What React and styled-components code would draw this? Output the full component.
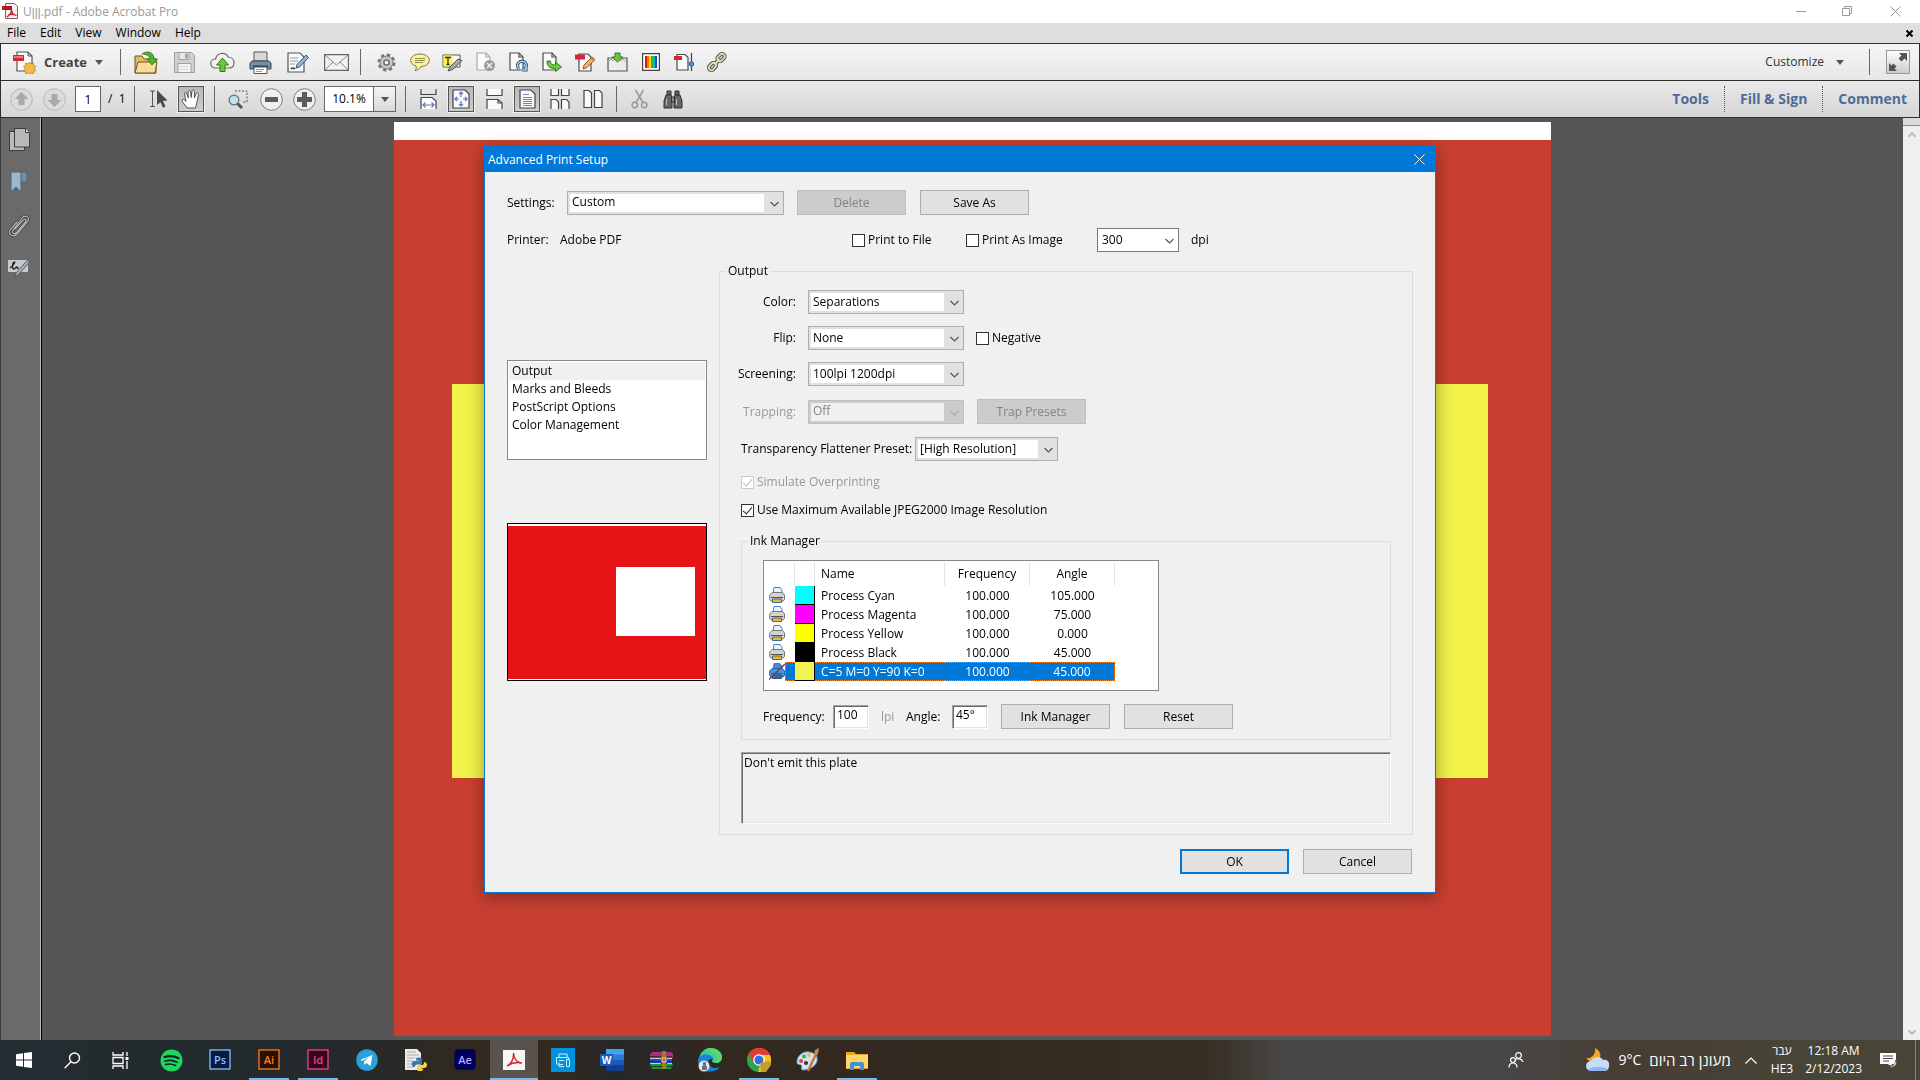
import styled, { createGlobalStyle, css } from 'styled-components'

const UI_FONT = '"Open Sans", "Noto Sans", "Liberation Sans", sans-serif'

export default function App() {
  return (
    <Window>
      <GlobalStyle />
      <TitleBar>
        <AcrobatIcon />
        <TitleText>Uןןן.pdf - Adobe Acrobat Pro</TitleText>
        <CaptionButton aria-label="Minimize">
          <svg width="11" height="11" viewBox="0 0 11 11" stroke="#999"><path d="M0 5.500h10" /></svg>
        </CaptionButton>
        <CaptionButton aria-label="Restore">
          <svg width="11" height="11" viewBox="0 0 11 11" fill="none" stroke="#999"><path d="M.5 2.500h7v7h-7zM2.500 2.500v-2h7v7h-2" /></svg>
        </CaptionButton>
        <CaptionButton aria-label="Close">
          <svg width="11" height="11" viewBox="0 0 11 11" stroke="#999"><path d="M.5.5l10 10M10.500.5l-10 10" /></svg>
        </CaptionButton>
      </TitleBar>

      <MenuBar>
        {['File', 'Edit', 'View', 'Window', 'Help'].map((name) => (
          <MenuButton key={name}>{name}</MenuButton>
        ))}
        <DocClose aria-label="Close document">
          <svg width="7" height="7" viewBox="0 0 7 7" stroke="#000" strokeWidth="2"><path d="M.5.5l6 6M6.500.5l-6 6" /></svg>
        </DocClose>
      </MenuBar>

      <MainToolbar>
        <CreateButton>
          <CreateIcon />
          Create
          <Caret />
        </CreateButton>
        <Separator />
        {fileTools.map(([name, Icon]) => (
          <ToolButton key={name} aria-label={name} $w={38}><Icon /></ToolButton>
        ))}
        <Separator $left={5} $right={9} />
        {quickTools.map(([name, Icon]) => (
          <ToolButton key={name} aria-label={name} $w={33}><Icon /></ToolButton>
        ))}
        <Spacer />
        <CustomizeButton>Customize <Caret /></CustomizeButton>
        <Separator $left={16} $right={16} />
        <ExpandButton aria-label="Read mode">
          <svg width="20" height="20" viewBox="0 0 20 20" fill="#555">
            <path d="M11 1h8v8l-2.500-2.500-3 3-3-3 3-3zM1 19v-8l2.500 2.500 2-2 3 3-2 2L9 19z" />
          </svg>
        </ExpandButton>
      </MainToolbar>

      <NavToolbar>
        <ToolButton $w={33} aria-label="Previous page"><RoundIcon dim d="M11.500 4l7 7h-4v6h-6v-6h-4z" /></ToolButton>
        <ToolButton $w={33} aria-label="Next page"><RoundIcon dim d="M11.500 19l7-7h-4v-6h-6v6h-4z" /></ToolButton>
        <PageInput aria-label="Page number" defaultValue="1" />
        <PageCount>/&nbsp;&nbsp;1</PageCount>
        <Separator />
        <ToolButton $w={34} aria-label="Select tool"><SelectIcon /></ToolButton>
        <PressedButton aria-label="Hand tool"><HandIcon /></PressedButton>
        <Separator />
        <ToolButton $w={34} aria-label="Marquee zoom"><MarqueeIcon /></ToolButton>
        <ToolButton $w={33} aria-label="Zoom out"><RoundIcon d="M5 9h13v5H5z" /></ToolButton>
        <ToolButton $w={33} aria-label="Zoom in"><RoundIcon d="M9 4h5v5h5v5h-5v5H9v-5H4V9h5z" /></ToolButton>
        <ZoomBox>
          <ZoomInput aria-label="Zoom" defaultValue="10.1%" />
          <ZoomDrop aria-label="Zoom levels"><Caret /></ZoomDrop>
        </ZoomBox>
        <Separator />
        <ToolButton $w={33} aria-label="Scrolling"><FitWidthIcon /></ToolButton>
        <PressedButton aria-label="Fit page"><FitPageIcon /></PressedButton>
        <ToolButton $w={34} aria-label="Continuous"><ContinuousIcon /></ToolButton>
        <PressedButton aria-label="Single page"><SinglePageIcon /></PressedButton>
        <ToolButton $w={33} aria-label="Two-up continuous"><TwoUpScrollIcon /></ToolButton>
        <ToolButton $w={33} aria-label="Two-up"><TwoUpIcon /></ToolButton>
        <Separator />
        <ToolButton $w={33} aria-label="Cut"><ScissorsIcon /></ToolButton>
        <ToolButton $w={33} aria-label="Find"><BinocularsIcon /></ToolButton>
        <Spacer />
        <PaneLinks>
          <PaneLink href="#tools">Tools</PaneLink>
          <PaneLink href="#sign">Fill &amp; Sign</PaneLink>
          <PaneLink href="#comment">Comment</PaneLink>
        </PaneLinks>
      </NavToolbar>

      <Workspace>
        <Rail>
          <RailButton aria-label="Page thumbnails"><PagesIcon /></RailButton>
          <RailButton aria-label="Bookmarks"><BookmarkIcon /></RailButton>
          <RailButton aria-label="Attachments"><ClipIcon /></RailButton>
          <RailButton aria-label="Signatures"><SignatureIcon /></RailButton>
        </Rail>
        <Canvas>
          <Sheet>
            <SheetInk><SheetBox /></SheetInk>
          </Sheet>
        </Canvas>
        <ScrollBar>
          <ScrollSplit />
          <Chevron w={8} color="#bbb" up />
          <Spacer />
          <Chevron w={8} color="#bbb" />
        </ScrollBar>
      </Workspace>

      <Taskbar />
      <DialogLayer>
        <PrintDialog />
      </DialogLayer>
    </Window>
  )
}

function PrintDialog() {
  return (
    <Dialog role="dialog" aria-label="Advanced Print Setup">
      <DialogTitle>
        Advanced Print Setup
        <DialogClose aria-label="Close">
          <svg width="11" height="11" viewBox="0 0 11 11" stroke="#fff"><path d="M.5.5l10 10M10.500.5l-10 10" /></svg>
        </DialogClose>
      </DialogTitle>
      <DialogBody>
        <Row>
          <Label htmlFor="settings" $w={60}>Settings:</Label>
          <Select id="settings" w={217} value="Custom" />
          <Button $left={13} disabled>Delete</Button>
          <Button $left={14}>Save As</Button>
        </Row>
        <PrinterRow>
          <Text $w={53}>Printer:</Text>
          <Text $w={292}>Adobe PDF</Text>
          <Check $w={114}><input type="checkbox" />Print to File</Check>
          <Check $w={131}><input type="checkbox" />Print As Image</Check>
          <Select id="dpi" w={82} value="300" open />
          <Label htmlFor="dpi" $left={12}>dpi</Label>
        </PrinterRow>

        <Columns>
          <SideColumn>
            <PanelList role="listbox" aria-label="Panels">
              {['Output', 'Marks and Bleeds', 'PostScript Options', 'Color Management'].map((name, i) => (
                <PanelItem key={name} role="option" aria-selected={i === 0} $on={i === 0}>{name}</PanelItem>
              ))}
            </PanelList>
            <Preview><PreviewInk><PreviewHole /></PreviewInk></Preview>
          </SideColumn>

          <Group>
            <legend>Output</legend>
            <GroupBody>
              <Row>
                <Label htmlFor="color" $w={55} $end>Color:</Label>
                <Select id="color" w={156} left={12} value="Separations" />
              </Row>
              <Row>
                <Label htmlFor="flip" $w={55} $end>Flip:</Label>
                <Select id="flip" w={156} left={12} value="None" />
                <Check $left={12}><input type="checkbox" />Negative</Check>
              </Row>
              <Row>
                <Label htmlFor="screening" $w={55} $end>Screening:</Label>
                <Select id="screening" w={156} left={12} value="100lpi 1200dpi" />
              </Row>
              <TrapRow>
                <Label htmlFor="trapping" $w={55} $end $dim>Trapping:</Label>
                <Select id="trapping" w={156} left={12} value="Off" disabled />
                <Button $left={13} disabled>Trap Presets</Button>
              </TrapRow>
              <Row>
                <Label htmlFor="flattener" $w={174}>Transparency Flattener Preset:</Label>
                <Select id="flattener" w={143} value="[High Resolution]" />
              </Row>
              <CheckStack>
                <Check $dim><input type="checkbox" defaultChecked disabled />Simulate Overprinting</Check>
                <Check><input type="checkbox" defaultChecked />Use Maximum Available JPEG2000 Image Resolution</Check>
              </CheckStack>
              <Group>
                <legend>Ink Manager</legend>
                <GroupBody>
                  <InkTable />
                  <InkControls>
                    <Label htmlFor="frequency" $w={70}>Frequency:</Label>
                    <SunkenInput id="frequency" defaultValue="100" />
                    <Text $left={12} $w={25} $dim>lpi</Text>
                    <Label htmlFor="angle" $w={46}>Angle:</Label>
                    <SunkenInput id="angle" defaultValue="45°" />
                    <Button $left={13}>Ink Manager</Button>
                    <Button $left={14}>Reset</Button>
                  </InkControls>
                </GroupBody>
              </Group>
              <Message>Don't emit this plate</Message>
            </GroupBody>
          </Group>
        </Columns>

        <DialogFooter>
          <Button $primary>OK</Button>
          <Button $left={14}>Cancel</Button>
        </DialogFooter>
      </DialogBody>
    </Dialog>
  )
}

const inks = [
  { name: 'Process Cyan', color: '#00ffff', freq: '100.000', angle: '105.000' },
  { name: 'Process Magenta', color: '#ff00ff', freq: '100.000', angle: '75.000' },
  { name: 'Process Yellow', color: '#ffff00', freq: '100.000', angle: '0.000' },
  { name: 'Process Black', color: '#000000', freq: '100.000', angle: '45.000' },
  { name: 'C=5 M=0 Y=90 K=0', color: '#f2f250', freq: '100.000', angle: '45.000', selected: true },
]

function InkTable() {
  return (
    <InkFrame>
      <Table>
        <colgroup>
          <col width="31" /><col width="20" /><col width="130" /><col width="85" /><col width="85" />
        </colgroup>
        <thead>
          <tr>
            <th aria-label="Emit" /><th aria-label="Swatch" /><th>Name</th><th>Frequency</th><th>Angle</th>
          </tr>
        </thead>
        <tbody>
          {inks.map((ink) => (
            <InkRow key={ink.name} $on={ink.selected}>
              <td><EmitCell $on={ink.selected}><InkPrinterIcon off={ink.selected} /></EmitCell></td>
              <Swatch $color={ink.color} />
              <td>{ink.name}</td>
              <td>{ink.freq}</td>
              <td>{ink.angle}</td>
            </InkRow>
          ))}
        </tbody>
      </Table>
    </InkFrame>
  )
}

function Select({ id, w, left, value, disabled, open }) {
  return (
    <SelectWrap $w={w} $left={left}>
      <SelectInput id={id} disabled={disabled} $open={open} defaultValue={value}>
        <option>{value}</option>
      </SelectInput>
      <SelectArrow><Chevron w={9} color={disabled ? '#aaa' : '#555'} thin /></SelectArrow>
    </SelectWrap>
  )
}

function Taskbar() {
  return (
    <TaskbarBase>
      <TaskButton aria-label="Start">
        <svg width="16" height="16" viewBox="0 0 16 16" fill="#fff"><path d="M0 2.200L7 1.200v6.300H0zM8 1l8-1v7.500H8zM0 8.500h7v6.300l-7-1zM8 8.500h8V16l-8-1.100z" /></svg>
      </TaskButton>
      <TaskButton aria-label="Search">
        <svg width="17" height="17" viewBox="0 0 17 17" fill="none" stroke="#fff" strokeWidth="1.400"><circle cx="10.500" cy="6" r="5" /><path d="M7 9.700L.6 16.200" /></svg>
      </TaskButton>
      <TaskButton aria-label="Task view">
        <svg width="17" height="17" viewBox="0 0 17 17" fill="none" stroke="#fff" strokeWidth="1.300"><path d="M1 0v3h10V0M1 5.500h10v6H1zM1 17v-3h10v3M15 0v4M15 9v8" /><path d="M13.500 5h3v3h-3z" fill="#fff" stroke="none" /></svg>
      </TaskButton>
      <AppRow>
        {taskApps.map(([name, Icon, state]) => (
          <TaskButton key={name} aria-label={name} $state={state}><Icon /></TaskButton>
        ))}
      </AppRow>
      <Spacer />
      <Tray>
        <TrayButton aria-label="People" $w={70}>
          <svg width="16" height="16" viewBox="0 0 16 16" fill="none" stroke="#fff" strokeWidth="1.200"><circle cx="10.500" cy="3.500" r="2.800" /><circle cx="5" cy="8" r="2.400" /><path d="M7 8.500c1.500-2.500 7-2.500 7.700 1.500M1 15.500c.3-6 7.700-6 8 0" /></svg>
        </TrayButton>
        <Weather>
          <svg width="25" height="24" viewBox="0 0 25 24">
            <path d="M10 0c6 3 7 9 3 12-4 3-9 2-12-2 6 1 10-4 9-10z" fill="#f5a524" />
            <path d="M6 23a5 5 0 010-10c1-4 9-6 12-1 4-1 7 2 6 6 0 3-2 5-5 5z" fill="#c8dcf8" />
            <path d="M3 22c5-5 15-3 20-1-1 1-2 2-4 2H6z" fill="#8db4ee" />
          </svg>
          <span>9°C</span>
          <span dir="rtl">מעונן רב היום</span>
        </Weather>
        <TrayButton aria-label="Hidden icons" $w={40}>
          <svg width="12" height="7" viewBox="0 0 12 7" fill="none" stroke="#fff" strokeWidth="1.200"><path d="M.5 6.500L6 1l5.500 5.500" /></svg>
        </TrayButton>
        <TrayText><span dir="rtl">עבר</span><span>HE3</span></TrayText>
        <TrayText $gap={12}><span>12:18 AM</span><span>2/12/2023</span></TrayText>
        <TrayButton aria-label="Notifications" $w={53}>
          <svg width="17" height="17" viewBox="0 0 17 17"><path d="M0 1h16v11h-4v4l-4-4H0z" fill="#fff" /><path d="M3 4h10M3 6.500h10M3 9h6" stroke="#444" /><path d="M15.500 8a4 4 0 11-6 5.500c4 1 6-2 6-5.500z" fill="#fff" stroke="#444" strokeWidth=".8" /></svg>
        </TrayButton>
      </Tray>
    </TaskbarBase>
  )
}

/* ---------- icons ---------- */

const Caret = () => (
  <svg width="8" height="5" viewBox="0 0 8 5" fill="#555"><path d="M0 0h8L4 5z" /></svg>
)

const Chevron = ({ w, color, up, thin }) => (
  <svg width={w} height="6" viewBox="0 0 9 6" fill="none" stroke={color} strokeWidth={thin ? 1.2 : 2.2}>
    <path d={up ? 'M.5 5L4.500 1l4 4' : 'M.5 1l4 4 4-4'} />
  </svg>
)

const RoundIcon = ({ d, dim }) => (
  <svg width="23" height="23" viewBox="0 0 23 23">
    <circle cx="11.500" cy="11.500" r="10.800" fill={dim ? '#dcdcdc' : '#f0f0f0'} stroke={dim ? '#b5b5b5' : '#7d7d7d'} />
    <path d={d} fill={dim ? '#aaa' : '#5c5c5c'} />
  </svg>
)

const Doc = ({ dim }) => (
  <g fill="#fbfbfb" stroke={dim ? '#aaa' : '#4a4a4a'} strokeWidth="1.200">
    <path d="M1 1h9l4 4v13H1z" /><path d="M10 1v4h4" fill="none" />
  </g>
)

const AcrobatIcon = () => (
  <svg width="17" height="17" viewBox="0 0 17 17">
    <path d="M3.500.5h9l3 3v12h-12z" fill="#f4f0f0" stroke="#8b5a5a" />
    <path d="M0 3h10v4H0z" fill="#b3151b" />
    <path d="M5 14c3-2 4.500-5 4.500-7.500M9.500 7c.5 3 2 5 5 5.500M6 12c3-1 5-1 8.500.5" fill="none" stroke="#b3151b" strokeWidth="1.200" />
  </svg>
)

const CreateIcon = () => (
  <svg width="23" height="23" viewBox="0 0 23 23">
    <path d="M4 1h11l4 4v15H4z" fill="#fafafa" stroke="#555" strokeWidth="1.200" />
    <path d="M15 1v4h4" fill="none" stroke="#555" />
    <path d="M0 4h11v6H0z" fill="#d6282e" /><path d="M1 5h9v2H1z" fill="#f0767a" />
    <path d="M16.500 11l1.500 2 2.500-1v2.500l2.500 1-1.500 2 1.500 2-2.500 1V23l-2.500-1-1.500 1-1.500-1-2.500 1v-2.500l-2-1 1.500-2-1.500-2 2-1V12l2.500 1z" fill="#f3bb45" stroke="#b97d15" strokeWidth=".7" />
  </svg>
)

const OpenIcon = () => (
  <svg width="24" height="23" viewBox="0 0 24 23">
    <path d="M1 22V5h7l2 3h12v14z" fill="#e3bd63" stroke="#6d572a" />
    <path d="M1 22l3-11h19l-2 11z" fill="#f6dc97" stroke="#6d572a" />
    <path d="M8 3c5-4 12-2 12 5h3.500L18 14l-5-6h3c0-3-4-5-8-5z" fill="#53b12e" stroke="#2d7512" strokeWidth=".8" />
  </svg>
)

const SaveIcon = () => (
  <svg width="21" height="21" viewBox="0 0 21 21" stroke="#a0a0a0" fill="#d0d0d0">
    <path d="M.5.500h17l3 3v17H.5z" /><path d="M5 .5h10v7H5z" fill="#e8e8e8" /><path d="M11.500 2h2v4h-2z" fill="#aaa" />
    <path d="M4 11.500h13v9H4z" fill="#f4f4f4" /><path d="M6 14.500h9M6 17.500h9" stroke="#ccc" strokeDasharray="2 1" />
  </svg>
)

const CloudIcon = () => (
  <svg width="25" height="20" viewBox="0 0 25 20">
    <path d="M5 16a4.500 4.500 0 01.5-9C7 0 16 0 18 5c4 0 6 3 6 6s-2 5-5 5z" fill="#f2f2f2" stroke="#6a6a6a" strokeWidth="1.200" />
    <path d="M12.500 6l6 7h-3.500v6.500h-5V13H6.500z" fill="#6cc93c" stroke="#2f7d14" />
  </svg>
)

const PrinterIcon = () => (
  <svg width="23" height="23" viewBox="0 0 23 23">
    <path d="M5 1h13v9H5z" fill="#d9d9d9" stroke="#555" />
    <path d="M1 12l2-2h17l2 2v6H1z" fill="#7390a8" stroke="#33475a" /><path d="M4 14.500h15v2H4z" fill="#2a3947" />
    <path d="M5 16h13v6.500H5z" fill="#fff" stroke="#555" /><path d="M7 18.500h8M7 20.500h6" stroke="#999" />
  </svg>
)

const EditDocIcon = () => (
  <svg width="22" height="21" viewBox="0 0 22 21">
    <path d="M1 1h12l4 4v15H1z" fill="#fbfbfb" stroke="#555" strokeWidth="1.200" />
    <path d="M3 6h8M3 9h8M3 12h5" stroke="#999" /><path d="M4 17c2-3 2 1 4-1" stroke="#222" fill="none" strokeWidth="1.400" />
    <path d="M9 16l1-3.500L19 3l2.500 2.500-9 9.500z" fill="#8fb2d6" stroke="#33475a" strokeWidth=".9" />
  </svg>
)

const MailIcon = () => (
  <svg width="25" height="17" viewBox="0 0 25 17" stroke="#666" fill="none">
    <path d="M.6.600h23.800v15.800H.6z" fill="#f1f1f1" strokeWidth="1.200" />
    <path d="M1 1l11.500 10L24 1M1 16l8-8M24 16l-8-8" stroke="#888" />
  </svg>
)

const GearIcon = () => (
  <svg width="19" height="19" viewBox="0 0 19 19">
    <circle cx="9.500" cy="9.500" r="7.800" fill="none" stroke="#777" strokeWidth="2.400" strokeDasharray="3.500 2.630" />
    <circle cx="9.500" cy="9.500" r="6.500" fill="#c8c8c8" stroke="#777" />
    <circle cx="9.500" cy="9.500" r="2.600" fill="#f1f1f1" stroke="#666" strokeWidth="1.400" />
  </svg>
)

const CommentIcon = () => (
  <svg width="20" height="19" viewBox="0 0 20 19">
    <path d="M10 1c5 0 9.300 2.500 9.300 6.300S15 13.500 11 13.500c-1.500 2.500-4 4-6 4 1.500-1.500 1.500-3 1-4.500C2.500 12 .7 10 .7 7.300.7 3.500 5 1 10 1z" fill="#fbf59a" stroke="#77754b" />
    <path d="M5 5.500h10M5 7.500h10M5 9.500h8" stroke="#8e8b4a" />
  </svg>
)

const HighlightIcon = () => (
  <svg width="21" height="19" viewBox="0 0 21 19">
    <path d="M1 2h17v12H1z" fill="#f8f8f8" stroke="#555" /><path d="M1.500 2.500h9v11h-9z" fill="#fdf04b" />
    <path d="M3 4.500h6M6 4.500v7M4.500 11.500h3" stroke="#333" strokeWidth="1.300" />
    <path d="M6 18l2-4 8-8 4 1.500-8 8-3 1.500z" fill="#a8a8a8" stroke="#444" strokeWidth=".9" />
  </svg>
)

const DocDeleteIcon = () => (
  <svg width="20" height="20" viewBox="0 0 20 20">
    <Doc dim /><circle cx="13.500" cy="13.500" r="5.500" fill="#9c9c9c" /><path d="M11 11l5 5M16 11l-5 5" stroke="#eee" strokeWidth="1.500" />
  </svg>
)

const DocRotateIcon = () => (
  <svg width="20" height="20" viewBox="0 0 20 20">
    <Doc /><path d="M10 17a4.500 4.500 0 116 0M13 18h4v-4" fill="none" stroke="#33567b" strokeWidth="3.200" />
    <path d="M10 17a4.500 4.500 0 116 0M13 18h4v-4" fill="none" stroke="#a9caea" strokeWidth="1.500" />
  </svg>
)

const DocExportIcon = () => (
  <svg width="20" height="20" viewBox="0 0 20 20">
    <Doc /><path d="M5 9h3.500c0 3 1 4 5 4v-3l6 5-6 4.500v-3C7 16.500 5 14 5 9z" fill="#6cc93c" stroke="#2f7d14" />
  </svg>
)

const PdfEditIcon = () => (
  <svg width="20" height="20" viewBox="0 0 20 20">
    <path d="M4 2h9l3 3v14H4z" fill="#fbfbfb" stroke="#4a4a4a" strokeWidth="1.200" />
    <path d="M0 2.500h10v5H0z" fill="#cf2630" />
    <path d="M8 17l1-4 8-8 3 2.500-8 8z" fill="#f6b267" stroke="#7a4a1a" strokeWidth=".9" /><path d="M17 5l3 2.500-1.500 1.500-3-2.500z" fill="#e96d5d" />
  </svg>
)

const InboxIcon = () => (
  <svg width="21" height="20" viewBox="0 0 21 20">
    <path d="M1 6h19v13H1z" fill="#ececec" stroke="#555" strokeWidth="1.200" />
    <path d="M2 9l2-2 2 2 2-2 2 2 2-2 2 2 2-2 3 3" stroke="#aaa" fill="none" />
    <path d="M8 1h5v4h3l-5.500 5L5 5h3z" fill="#6cc93c" stroke="#2f7d14" />
  </svg>
)

const SpectrumIcon = () => (
  <svg width="18" height="18" viewBox="0 0 18 18">
    <path d="M.6.600h16.800v16.800H.6z" fill="#fff" stroke="#444" strokeWidth="1.200" />
    {['#d11', '#f70', '#fd0', '#2b3', '#0bc', '#24c'].map((c, i) => (
      <path key={c} d={`M${3 + i * 2} 3h2v12h-2z`} fill={c} />
    ))}
  </svg>
)

const PdfSliderIcon = () => (
  <svg width="20" height="18" viewBox="0 0 20 18">
    <path d="M3 1.500h8l3 3V17H3z" fill="#fbfbfb" stroke="#4a4a4a" strokeWidth="1.200" />
    <path d="M0 3h8v4H0z" fill="#cf2630" /><path d="M17.500 0v18" stroke="#444" strokeWidth="1.200" />
    <circle cx="17.500" cy="11" r="2.200" fill="#4f93dd" stroke="#265a94" />
  </svg>
)

const ChainIcon = () => (
  <svg width="20" height="20" viewBox="0 0 20 20" fill="none">
    {[['#555', 4], ['#e5dcb8', 1.8]].map(([c, w]) => (
      <g key={c} stroke={c} strokeWidth={w}>
        <rect x="-4" y="-2.500" width="8" height="5" rx="2.500" transform="translate(5.500 14.500) rotate(-45)" />
        <rect x="-4" y="-2.500" width="8" height="5" rx="2.500" transform="translate(14 5.500) rotate(-45)" />
        <path d="M7.500 12.500l5-5" />
      </g>
    ))}
  </svg>
)

const SelectIcon = () => (
  <svg width="19" height="18" viewBox="0 0 19 18">
    <path d="M1 1h5M1 16.500h5M3.500 1v15.500" stroke="#555" fill="none" />
    <path d="M8 0l10.500 10.500-4.500.5 2.500 5.500-2.500 1.200-2.500-5.500L8 15z" fill="#4c4c4c" />
  </svg>
)

const HandIcon = () => (
  <svg width="20" height="20" viewBox="0 0 20 20">
    <path d="M6 19c-1-3-5-5-5-8 1-1.500 3 0 4 1.500L3.500 5c0-1.800 2-1.800 2.500 0l1.300 4L7 3c0-2 2.300-2 2.500 0l.7 5.500.8-6.500c.3-1.500 2.500-1.200 2.500.5L13.300 9l2-4.500c.7-1.300 2.500-.6 2.200 1L16 13l-1.500 6z" fill="#fff" stroke="#555" />
  </svg>
)

const MarqueeIcon = () => (
  <svg width="20" height="19" viewBox="0 0 20 19">
    <path d="M7 1h12v11h-5" fill="none" stroke="#555" strokeDasharray="2 1.500" />
    <circle cx="6" cy="10" r="4.800" fill="#bfe4f5" stroke="#777" strokeWidth="1.400" /><path d="M9.500 13.500l4.500 4.500" stroke="#555" strokeWidth="3" />
  </svg>
)

const FitWidthIcon = () => (
  <svg width="17" height="20" viewBox="0 0 17 20" fill="none" stroke="#444" strokeWidth="1.200">
    <path d="M1 0v5.500h15V0" /><path d="M1 20V8.500h11l4 3.500v8" fill="#fff" /><path d="M3 16h11M5.500 13.500L3 16l2.500 2.500M11.500 13.500L14 16l-2.500 2.500" stroke="#5a76b8" />
  </svg>
)

const FitPageIcon = () => (
  <svg width="18" height="20" viewBox="0 0 18 20" fill="none" stroke="#444" strokeWidth="1.200">
    <path d="M1 1h12l4 4v14H1z" fill="#fafafa" />
    <path d="M9 3v5M9 12v5M3 10h4M11 10h4M7 5l2-2 2 2M7 15l2 2 2-2M5 8l-2 2 2 2M13 8l2 2-2 2" stroke="#5a76b8" />
  </svg>
)

const ContinuousIcon = () => (
  <svg width="17" height="20" viewBox="0 0 17 20" fill="#fafafa" stroke="#444" strokeWidth="1.200">
    <path d="M1 0v6.500h15V0M1 20v-9.500h11l4 3.500v6" /><path d="M12 10.500V14h4" fill="none" />
  </svg>
)

const SinglePageIcon = () => (
  <svg width="17" height="20" viewBox="0 0 17 20" fill="none" stroke="#444" strokeWidth="1.200">
    <path d="M1 1h11l4 4v14H1z" fill="#fafafa" /><path d="M4 5.500h6M4 8.500h9M4 10.500h9M4 12.500h9M4 14.500h9M4 16.500h9" stroke="#6d86bf" />
  </svg>
)

const TwoUpScrollIcon = () => (
  <svg width="20" height="20" viewBox="0 0 20 20" fill="#fafafa" stroke="#444" strokeWidth="1.200">
    <path d="M1 0v6.500h7.500V0M11.500 0v6.500H19V0M1 20v-9.500h5l2.500 2.500v7M11.500 20v-9.500h5L19 13v7" />
  </svg>
)

const TwoUpIcon = () => (
  <svg width="20" height="20" viewBox="0 0 20 20" fill="#fafafa" stroke="#444" strokeWidth="1.200">
    <path d="M1 1.500h5l2.500 2.500v14.500H1zM11.500 1.500h5L19 4v14.500h-7.500z" />
  </svg>
)

const ScissorsIcon = () => (
  <svg width="17" height="20" viewBox="0 0 17 20" fill="none" stroke="#999" strokeWidth="1.500">
    <circle cx="3.800" cy="16" r="2.700" /><circle cx="13.200" cy="16" r="2.700" /><path d="M5 13.500L12.500 1M12 13.500L4.500 1" />
  </svg>
)

const BinocularsIcon = () => (
  <svg width="20" height="19" viewBox="0 0 20 19" fill="#666" stroke="#2f2f2f">
    <path d="M4 1h4v4H4zM12 1h4v4h-4z" /><path d="M3 5h5l1 3v10H1v-7zM12 5h5l2 6v7h-8V8z" /><path d="M8.500 7h3v5h-3z" fill="#888" />
    <path d="M3.500 9v6M13.500 9v6" stroke="#bbb" />
  </svg>
)

const PagesIcon = () => (
  <svg width="21" height="23" viewBox="0 0 21 23" fill="#b9b9b9" stroke="#3c3c3c">
    <path d="M.5 3.500h15v19H.5z" /><path d="M5.500.500h11l4 4v14.500h-15z" /><path d="M16.500.500v4h4" fill="#ddd" />
  </svg>
)

const BookmarkIcon = () => (
  <svg width="18" height="23" viewBox="0 0 18 23">
    <path d="M8 1h9v10H8z" fill="#6f8fa6" stroke="#4a6377" /><path d="M1 1h10v20l-5-5-5 5z" fill="#9db6c8" stroke="#4a6377" />
  </svg>
)

const ClipIcon = () => (
  <svg width="22" height="23" viewBox="0 0 22 23" fill="none" strokeLinecap="round">
    <path d="M7 15L15 6c2-2 4 0 2.500 2L9 18c-3 3-6 1-4-2L14 4c3-4 8-1 6 3L10 19c-4 5-11 2-8-3l7-8" stroke="#3c3c3c" strokeWidth="2.600" />
    <path d="M7 15L15 6c2-2 4 0 2.500 2L9 18c-3 3-6 1-4-2L14 4c3-4 8-1 6 3L10 19c-4 5-11 2-8-3l7-8" stroke="#b5b5b5" strokeWidth="1.200" />
  </svg>
)

const SignatureIcon = () => (
  <svg width="23" height="19" viewBox="0 0 23 19">
    <path d="M0 1h20v12H0z" fill="#c9c9c9" /><path d="M2 9c4-3 6-7 4-6s-2 7 0 7 2-3 3-2-1 2 2 1" fill="none" stroke="#222" strokeWidth="1.300" />
    <path d="M7 18l1-4L19 1.500l3 1L11 15z" fill="#9db0c0" stroke="#4a5866" strokeWidth=".9" />
  </svg>
)

const InkPrinterIcon = ({ off }) => (
  <svg width="16" height="17" viewBox="0 0 16 17">
    <path d="M5 .5h6l2 3V7H4z" fill={off ? '#3a8fe0' : '#eaf3fc'} stroke="#4c7fb8" />
    <path d="M.7 8L3 5.500h10.500L15.500 8v4.500L14 14H2L.7 12.500z" fill={off ? '#4c95d4' : '#d2d2d2'} stroke={off ? '#2a66a5' : '#777'} />
    <path d="M2 10.500h12" stroke={off ? '#2a66a5' : '#555'} />
    <path d="M3.500 12h9v3.500h-9z" fill={off ? '#2e6fa5' : '#efb91f'} stroke={off ? '#29557c' : '#46689a'} />
    {off && <path d="M0 16.500L16 1" stroke="#8a3468" strokeWidth="1.500" />}
  </svg>
)

const fileTools = [
  ['Open', OpenIcon], ['Save', SaveIcon], ['Share', CloudIcon],
  ['Print', PrinterIcon], ['Edit text', EditDocIcon], ['Email', MailIcon],
]

const quickTools = [
  ['Preferences', GearIcon], ['Add note', CommentIcon], ['Highlight text', HighlightIcon],
  ['Delete pages', DocDeleteIcon], ['Rotate pages', DocRotateIcon], ['Export pages', DocExportIcon],
  ['Edit object', PdfEditIcon], ['Insert pages', InboxIcon], ['Output preview', SpectrumIcon],
  ['Preflight', PdfSliderIcon], ['Add link', ChainIcon],
]

const AdobeTile = ({ text, bg, fg, round }) => (
  <svg width="22" height="22" viewBox="0 0 22 22">
    <rect x="1" y="1" width="20" height="19" rx={round ? 3 : 0} fill={bg} stroke={round ? bg : fg} strokeWidth="1.300" />
    <text x="11" y="15" fill={fg} fontSize="11" fontWeight="600" textAnchor="middle">{text}</text>
  </svg>
)

const Spotify = () => (
  <svg width="23" height="23" viewBox="0 0 23 23" fill="none" stroke="#16231b" strokeLinecap="round">
    <circle cx="11.500" cy="11.500" r="11" fill="#1ed760" stroke="none" />
    <path d="M4.500 8c5-1.500 10-1 14 1.200" strokeWidth="2.200" /><path d="M5 12c4.500-1.300 8.500-.8 12 1.200" strokeWidth="1.800" /><path d="M5.500 15.500c4-1 7-.6 10 1" strokeWidth="1.500" />
  </svg>
)
const Telegram = () => (
  <svg width="22" height="22" viewBox="0 0 22 22"><circle cx="11" cy="11" r="10.800" fill="#2a9fd8" /><path d="M4 11l12.500-5-2 11-4-3-2 2-.5-3.500 5.500-5-7 4.300z" fill="#fff" /></svg>
)
const PythonFile = () => (
  <svg width="24" height="24" viewBox="0 0 24 24">
    <path d="M1 1h12l4 4v17H1z" fill="#ececec" /><path d="M3 4h9M3 7h12M3 10h8M3 13h6M3 16h6M3 19h6" stroke="#aaa" />
    <path d="M12 14v-3c0-2 6-2 6 0v4c0 1-1 1.500-2 1.500h-3c-1.500 0-2 1-2 2.500h-1c-3 0-3-6 0-6h5v-.5h-3z" fill="#3b77a8" />
    <path d="M20 14c4 0 4 6 0 6h-4v.5h3v1c0 2-6 2-6 0v-3c0-1 1-1.500 2-1.500h3c1.500 0 2-1 2-3z" fill="#ffd43b" />
  </svg>
)
const AcrobatApp = () => (
  <svg width="22" height="20" viewBox="0 0 22 20"><path d="M0 0h22v20H0z" fill="#f6f6f6" /><path d="M4 16c4-2 7-7 6.500-12.500.5 5 3.500 9 8 9.500-5-1-10 0-14.500 3" fill="none" stroke="#d5202a" strokeWidth="1.500" strokeLinejoin="round" /></svg>
)
const PrintApp = () => (
  <svg width="24" height="24" viewBox="0 0 24 24" fill="none" stroke="#cdeeff"><path d="M0 0h24v24H0z" fill="#0092da" stroke="none" /><path d="M8 9V6h8v3M7 16H5.500V9.500h12V11M8 12.500h5M8 14.500v4h5M8 16.500h4M15.500 11.500h3v7h-3z" /></svg>
)
const WordApp = () => (
  <svg width="24" height="22" viewBox="0 0 24 22">
    <path d="M6 0h18v6H6z" fill="#41a5ee" /><path d="M6 5.500h18V11H6z" fill="#2b7cd3" /><path d="M6 11h18v5.500H6z" fill="#185abd" /><path d="M6 16.500h18V22H6z" fill="#103f91" />
    <rect y="5" width="13" height="12" rx="1" fill="#185abd" /><text x="6.500" y="14.500" fill="#fff" fontSize="10" fontWeight="700" textAnchor="middle">W</text>
  </svg>
)
const WinRar = () => (
  <svg width="24" height="19" viewBox="0 0 24 19">
    <path d="M1 3l3-2h18l2 2v4H1z" fill="#a9327f" /><path d="M1 8h22v4H1z" fill="#2c49c8" /><path d="M1 13h23l-2 5H3z" fill="#1e9a32" />
    <path d="M1 5.500h11M1 10.500h11M2 15.500h11M18 5.500h5M18 10.500h5M18 15.500h5" stroke="#222" strokeWidth=".8" /><path d="M1 7.500h11M1 12.500h11M18 7.500h5M18 12.500h5" stroke="#eee" strokeWidth=".8" />
    <path d="M13 0h4v18h-4z" fill="#a9752c" /><path d="M13 7h4v4h-4z" fill="none" stroke="#e6d08a" />
  </svg>
)
const Edge = () => (
  <svg width="24" height="24" viewBox="0 0 24 24">
    <path d="M1 11C2 4 7 0 13 0c6 0 11 4 11 9 0 4-3 6-6 6-4 0-5-2-3-4-1-4-9-5-14 0z" fill="#3ccf9a" />
    <path d="M12 0c6 0 12 4 12 9 0 4-3 6-6 6 3-6-2-12-12-13 2-1 4-2 6-2z" fill="#57d86c" />
    <path d="M0 12c1-6 12-8 15-1-4-1-6 3-4 6s6 4 11 2c-5 7-22 7-22-7z" fill="#1583d8" />
    <circle cx="6" cy="18" r="5.500" fill="#dfe6ee" /><path d="M5 14h3v4H5zM4 18h5v4H4z" fill="#6b737c" />
  </svg>
)
const Chrome = () => (
  <svg width="24" height="24" viewBox="0 0 24 24">
    <circle cx="12" cy="12" r="12" fill="#2ea44f" /><path d="M1.600 6A12 12 0 0122.400 6L12 12z" fill="#e33b2e" /><path d="M22.400 6H12l2 8-3 10A12 12 0 0022.400 6z" fill="#fbc21a" />
    <path d="M1.600 6l5 9L12 7h11l-.6-1A12 12 0 001.600 6z" fill="#e33b2e" /><circle cx="12" cy="12" r="5.800" fill="#fff" /><circle cx="12" cy="12" r="4.500" fill="#2a72e5" />
    <path d="M13 15l9-2 2 4-5 7h-5z" fill="#c79b32" />
  </svg>
)
const Paint = () => (
  <svg width="24" height="24" viewBox="0 0 24 24">
    <path d="M1 14C1 8 7 3 13 4s9 4 8 9-8 9-14 9c-3 0 0-4-2-5s-4 0-4-3z" fill="#cfe3f3" stroke="#6f9dc3" />
    <circle cx="5" cy="13" r="2" fill="#d9443f" /><circle cx="8" cy="8.500" r="2" fill="#4aa83c" /><circle cx="13" cy="7" r="2" fill="#efc02f" /><circle cx="10" cy="15" r="2" fill="#2b3540" />
    <path d="M12 23L20 6" stroke="#c4742a" strokeWidth="2.200" /><path d="M18 6l1-4 4-2-1 6-2 2z" fill="#b58a60" />
  </svg>
)
const Explorer = () => (
  <svg width="22" height="19" viewBox="0 0 22 19">
    <path d="M0 1h8l2 2h12v15H0z" fill="#e9a820" /><path d="M0 4h22v13H0z" fill="#ffd667" /><path d="M4 19v-6c0-1 1-2 2-2h10c1 0 2 1 2 2v6h-4v-4H8v4z" fill="#3e94d6" />
  </svg>
)

const taskApps = [
  ['Spotify', Spotify],
  ['Photoshop', () => <AdobeTile text="Ps" bg="#0b1a45" fg="#86bdf5" />],
  ['Illustrator', () => <AdobeTile text="Ai" bg="#2b0f05" fg="#ff7c1f" />, 'running'],
  ['InDesign', () => <AdobeTile text="Id" bg="#31081c" fg="#f43f8e" />, 'running'],
  ['Telegram', Telegram],
  ['Python', PythonFile],
  ['After Effects', () => <AdobeTile text="Ae" bg="#00005b" fg="#b9a6ff" round />],
  ['Acrobat', AcrobatApp, 'active'],
  ['Printers', PrintApp],
  ['Word', WordApp],
  ['WinRAR', WinRar],
  ['Edge', Edge],
  ['Chrome', Chrome, 'running'],
  ['Paint', Paint],
  ['File Explorer', Explorer, 'running'],
]

/* ---------- styles ---------- */

const GlobalStyle = createGlobalStyle`
  *, *::before, *::after {
    box-sizing: border-box;
  }
  body {
    margin: 0;
    font: 12px/18px ${UI_FONT};
    color: #000;
  }
  button, input, select {
    font: inherit;
    color: inherit;
    margin: 0;
  }
  button {
    padding: 0;
    border: 0;
    background: none;
  }
  svg {
    display: block;
    flex: none;
  }
`

const Window = styled.div`
  display: flex;
  flex-direction: column;
  height: 100vh;
  overflow: hidden;
`

const TitleBar = styled.header`
  display: flex;
  align-items: center;
  height: 23px;
  padding-left: 2px;
  background: #fff;
`

const TitleText = styled.span`
  flex: 1;
  margin-left: 4px;
  color: #999;
`

const CaptionButton = styled.button`
  display: flex;
  align-items: center;
  justify-content: center;
  width: 46px;
  height: 20px;
  &:last-child {
    width: 50px;
  }
`

const MenuBar = styled.nav`
  display: flex;
  align-items: center;
  height: 20px;
  padding-right: 7px;
  background: #dedede;
`

const MenuButton = styled.button`
  padding: 0 7px;
`

const DocClose = styled.button`
  margin-left: auto;
`

const toolbar = css`
  display: flex;
  align-items: center;
  border: 1px solid #2e2e2e;
  border-bottom: 0;
`

const MainToolbar = styled.div`
  ${toolbar}
  height: 37px;
  padding: 0 9px 0 12px;
  background: linear-gradient(#f5f5f5, #e7e7e7);
`

const NavToolbar = styled.div`
  ${toolbar}
  height: 38px;
  padding: 0 12px 0 4px;
  background: linear-gradient(#e8e8e8, #d6d6d6);
  border-bottom: 1px solid #2e2e2e;
`

const Separator = styled.span`
  width: 1px;
  height: 26px;
  margin: 0 ${({ $right = 6 }) => $right}px 0 ${({ $left = 7 }) => $left}px;
  background: #666;
`

const Spacer = styled.span`
  flex: 1;
`

const ToolButton = styled.button`
  display: flex;
  align-items: center;
  justify-content: center;
  width: ${({ $w }) => $w}px;
  height: 32px;
`

const PressedButton = styled(ToolButton)`
  width: 26px;
  height: 26px;
  margin: 0 3px;
  border: 1px solid #555;
  background: linear-gradient(#b9b9b9, #cdcdcd);
  outline: 1px solid #f2f2f2;
`

const CreateButton = styled.button`
  display: flex;
  align-items: center;
  gap: 8px;
  margin-right: 10px;
  font-size: 13px;
  font-weight: 700;
  color: #444;
`

const CustomizeButton = styled.button`
  display: flex;
  align-items: center;
  gap: 12px;
  margin-right: 9px;
  color: #333;
`

const ExpandButton = styled.button`
  display: flex;
  align-items: center;
  justify-content: center;
  width: 24px;
  height: 24px;
  border: 1px solid #999;
  background: linear-gradient(#fff, #ccc);
`

const PageInput = styled.input`
  width: 26px;
  height: 26px;
  margin-left: 4px;
  border: 1px solid #666;
  background: #fff;
  text-align: center;
`

const PageCount = styled.span`
  width: 19px;
  margin-left: 7px;
`

const ZoomBox = styled.div`
  display: flex;
  width: 72px;
  height: 26px;
  margin: 0 2px 0 3px;
  border: 1px solid #666;
`

const ZoomInput = styled.input`
  width: 48px;
  border: 0;
  padding: 0;
  text-align: center;
`

const ZoomDrop = styled.button`
  flex: 1;
  display: flex;
  align-items: center;
  justify-content: center;
  border-left: 1px solid #666;
  background: linear-gradient(#f4f4f4, #d9d9d9);
`

const PaneLinks = styled.nav`
  display: flex;
`

const PaneLink = styled.a`
  padding: 4px 15px;
  font-size: 14px;
  font-weight: 700;
  color: #4c6c99;
  text-decoration: none;
  & + & {
    border-left: 1px dotted #555;
  }
  &:last-child {
    padding-right: 0;
  }
`

const Workspace = styled.main`
  flex: 1;
  min-height: 0;
  display: flex;
  border-left: 1px solid #3a3a3a;
  background: #565656;
`

const Rail = styled.aside`
  display: flex;
  flex-direction: column;
  width: 41px;
  border-right: 1px solid #000;
  background: #6a6a6a;
  box-shadow: inset -1px 0 #bbb;
`

const RailButton = styled.button`
  display: flex;
  align-items: center;
  justify-content: center;
  width: 36px;
  height: 43px;
`

const Canvas = styled.div`
  flex: 1;
  display: flex;
  justify-content: center;
  padding: 4px 0;
`

const Sheet = styled.div`
  display: flex;
  height: 100%;
  aspect-ratio: 1157 / 914;
  padding-top: 18px;
  background: #fff;
`

const SheetInk = styled.div`
  flex: 1;
  display: flex;
  padding: 244px 63px 258px 58px;
  background: #c83f31;
`

const SheetBox = styled.div`
  flex: 1;
  background: #f2f24b;
`

const ScrollBar = styled.div`
  display: flex;
  flex-direction: column;
  align-items: center;
  width: 17px;
  padding-bottom: 5px;
  background: #f0f0f0;
`

const ScrollSplit = styled.span`
  width: 17px;
  height: 8px;
  margin-bottom: 6px;
  border-bottom: 1px solid #888;
  background: #dcdcdc;
`

const DialogLayer = styled.div`
  position: fixed;
  inset: 0 0 41px;
  display: flex;
  align-items: center;
  justify-content: center;
`

const Dialog = styled.section`
  width: 952px;
  border: 1px solid #0078d7;
  background: #f0f0f0;
  box-shadow: 0 4px 16px rgba(0, 0, 0, 0.35);
`

const DialogTitle = styled.h1`
  display: flex;
  align-items: center;
  justify-content: space-between;
  height: 25px;
  margin: 0;
  padding: 0 10px 0 3px;
  background: #0078d7;
  color: #fff;
  font-size: 12px;
  font-weight: 400;
`

const DialogClose = styled.button`
  color: #fff;
`

const DialogBody = styled.form`
  padding: 18px 22px;
`

const Row = styled.div`
  display: flex;
  align-items: center;
  min-height: 24px;
`

const PrinterRow = styled(Row)`
  margin-top: 13px;
`

const TrapRow = styled(Row)`
  min-height: 27px;
`

const InkControls = styled(Row)`
  margin-top: 1px;
`

const text = css`
  flex: none;
  width: ${({ $w }) => ($w ? `${$w}px` : 'auto')};
  margin-left: ${({ $left = 0 }) => $left}px;
  color: ${({ $dim }) => ($dim ? '#999' : '#000')};
  white-space: nowrap;
`

const Text = styled.span`
  ${text}
`

/* right-aligned labels may grow past their column on the left */
const Label = styled.label`
  ${text}
  ${({ $end }) => $end && 'display: flex; justify-content: flex-end;'}
`

const Check = styled.label`
  ${text}
  display: flex;
  align-items: center;
  gap: 3px;
  input {
    appearance: none;
    display: flex;
    justify-content: center;
    width: 13px;
    height: 13px;
    border: 1px solid ${({ $dim }) => ($dim ? '#ccc' : '#333')};
    background: #fff;
  }
  input:checked::before {
    content: '';
    width: 5px;
    height: 9px;
    border: solid ${({ $dim }) => ($dim ? '#bbb' : '#222')};
    border-width: 0 1px 1px 0;
    transform: rotate(40deg);
  }
`

const Button = styled.button.attrs({ type: 'button' })`
  flex: none;
  width: 109px;
  height: 25px;
  margin-left: ${({ $left = 0 }) => $left}px;
  border: ${({ $primary }) => ($primary ? '2px solid #0078d7' : '1px solid #adadad')};
  background: #e1e1e1;
  &:disabled {
    border-color: #bfbfbf;
    background: #ccc;
    color: #838383;
  }
`

const SelectWrap = styled.span`
  position: relative;
  flex: none;
  width: ${({ $w }) => $w}px;
  margin-left: ${({ $left = 0 }) => $left}px;
`

const SelectInput = styled.select`
  appearance: none;
  display: block;
  width: 100%;
  height: 24px;
  padding: 0 20px 1px 4px;
  border: 1px solid ${({ $open }) => ($open ? '#7a7a7a' : '#adadad')};
  border-radius: 0;
  background: ${({ $open }) =>
    $open ? '#fff' : 'linear-gradient(#fff, #fff) 2px 2px / calc(100% - 21px) 18px no-repeat #e1e1e1'};
  &:disabled {
    border-color: #bfbfbf;
    background-color: #ccc;
    background-image: linear-gradient(#f0f0f0, #f0f0f0);
    color: #838383;
    opacity: 1;
  }
`

const SelectArrow = styled.span`
  position: absolute;
  top: 10px;
  right: 5px;
  pointer-events: none;
`

const Columns = styled.div`
  display: grid;
  grid-template-columns: 200px 1fr;
  gap: 12px;
  margin-top: 10px;
`

const SideColumn = styled.div`
  display: flex;
  flex-direction: column;
  gap: 63px;
  padding-top: 98px;
`

const PanelList = styled.ul`
  height: 100px;
  margin: 0;
  padding: 1px;
  border: 1px solid #828790;
  background: #fff;
  list-style: none;
`

const PanelItem = styled.li`
  padding-left: 3px;
  background: ${({ $on }) => ($on ? '#f0f0f0' : '#fff')};
`

const Preview = styled.div`
  display: flex;
  height: 158px;
  padding: 2px 0 1px;
  border: 1px solid #000;
  background: #fff;
`

const PreviewInk = styled.div`
  flex: 1;
  display: flex;
  padding: 41px 11px 43px 108px;
  background: #e61417;
`

const PreviewHole = styled.div`
  flex: 1;
  background: #fff;
`

const Group = styled.fieldset`
  min-width: 0;
  margin: 0;
  padding: 0;
  border: 1px solid #dcdcdc;
  legend {
    margin-left: 6px;
    padding: 0 2px;
  }
`

const GroupBody = styled.div`
  display: flex;
  flex-direction: column;
  gap: 12px;
  padding: 10px 21px;
`

const CheckStack = styled.div`
  display: flex;
  flex-direction: column;
  gap: 10px;
  padding-bottom: 1px;
`

const InkFrame = styled.div`
  width: 396px;
  height: 131px;
  padding-top: 1px;
  border: 1px solid #828790;
  background: #fff;
`

const Table = styled.table`
  width: 351px;
  table-layout: fixed;
  border-spacing: 0;
  th, td {
    padding: 0;
    font-weight: 400;
    text-align: center;
    white-space: nowrap;
  }
  th {
    height: 24px;
    border-right: 1px solid #e5e5e5;
  }
  th:nth-child(3), td:nth-child(3) {
    padding-left: 6px;
    text-align: left;
  }
`

const InkRow = styled.tr`
  td {
    height: 19px;
    line-height: 17px;
  }
  ${({ $on }) => $on && css`
    color: #fff;
    td:nth-child(n + 3) {
      background: #0078d7;
      border-top: 1px dotted #ff8728;
      border-bottom: 1px dotted #ff8728;
    }
    td:last-child {
      border-right: 1px dotted #ff8728;
    }
  `}
`

const EmitCell = styled.div`
  display: flex;
  align-items: center;
  height: 19px;
  padding-left: 5px;
  &::after {
    content: '';
    flex: 1;
    align-self: stretch;
    ${({ $on }) => $on && css`
      background: #0078d7;
      border: 1px dotted #ff8728;
      border-right: 0;
    `}
  }
`

const Swatch = styled.td`
  border: solid #000;
  border-width: 0 1px 1px 0;
  background: ${({ $color }) => $color};
`

const sunken = css`
  border: 1px solid;
  border-color: #a0a0a0 #fff #fff #a0a0a0;
  box-shadow: inset 1px 1px #696969, inset -1px -1px #e3e3e3;
`

const SunkenInput = styled.input`
  ${sunken}
  flex: none;
  width: 36px;
  height: 24px;
  padding: 0 0 4px 3px;
  background: #fff;
`

const Message = styled.div`
  ${sunken}
  height: 72px;
  padding: 1px 2px;
`

const DialogFooter = styled.div`
  display: flex;
  justify-content: flex-end;
  margin-top: 14px;
  padding-right: 1px;
`

const TaskbarBase = styled.footer`
  flex: none;
  display: flex;
  height: 40px;
  background: linear-gradient(
    90deg, #232c31 0, #242a2c 18%, #33281e 25%, #33291f 29%, #25272a 32%, #31281f 37%,
    #33291f 50%, #382e24 63%, #484846 67%, #474747 78%, #473d33 85%, #474537 93%, #474537 100%
  );
  color: #fff;
`

const AppRow = styled.div`
  display: flex;
  gap: 1px;
  margin-left: 3px;
`

const TaskButton = styled.button`
  display: flex;
  align-items: center;
  justify-content: center;
  width: 48px;
  height: 40px;
  ${({ $state }) => $state === 'running' && css`
    background: linear-gradient(#76b9ed, #76b9ed) center bottom / 40px 2px no-repeat;
  `}
  ${({ $state }) => $state === 'active' && css`
    background: #5a524c;
    box-shadow: inset 0 -2px #76b9ed;
  `}
`

const Tray = styled.div`
  display: flex;
  align-items: center;
  margin-right: 4px;
  border-right: 1px solid #888;
`

const TrayButton = styled.button`
  display: flex;
  align-items: center;
  justify-content: center;
  width: ${({ $w }) => $w}px;
  height: 40px;
`

const Weather = styled.div`
  display: flex;
  align-items: center;
  gap: 8px;
  margin-left: 34px;
  font-size: 14px;
  span[dir] {
    font-size: 15px;
  }
`

const TrayText = styled.div`
  display: flex;
  flex-direction: column;
  align-items: center;
  margin-left: ${({ $gap = 0 }) => $gap}px;
`
